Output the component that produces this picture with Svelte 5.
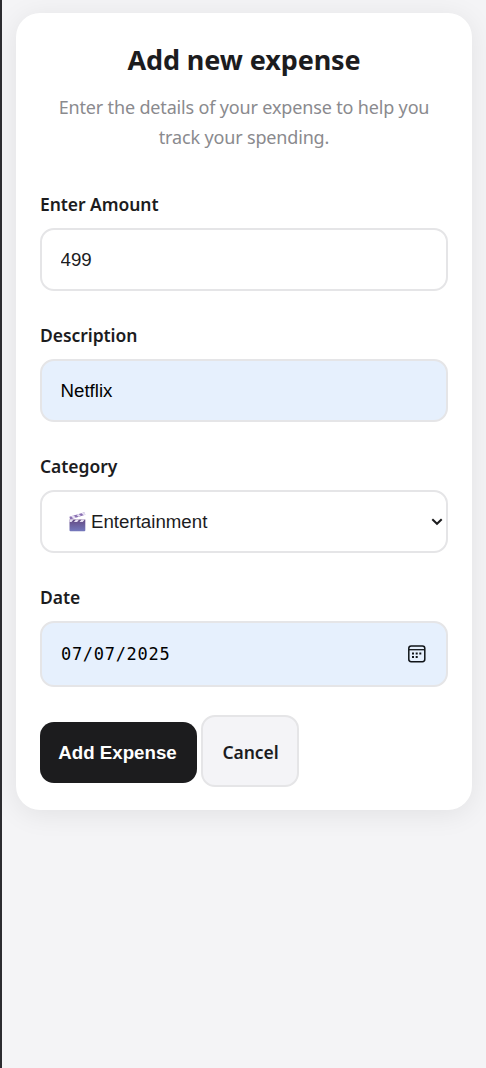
<script>
  let amount = $state('499');
  let description = $state('Netflix');
</script>

<main>
  <form class="card">
    <header>
      <h1>Add new expense</h1>
      <p>Enter the details of your expense to help you<br />track your spending.</p>
    </header>

    <label for="amount">Enter Amount</label>
    <input id="amount" bind:value={amount} />

    <label for="description">Description</label>
    <input id="description" class="filled" bind:value={description} />

    <span class="label">Category</span>
    <div class="field select">
      <svg class="clapper" width="17" height="20" viewBox="0 0 17 20" aria-hidden="true">
        <defs>
          <linearGradient id="board" x2="0" y2="1">
            <stop offset="0" stop-color="#654a83" />
            <stop offset="1" stop-color="#7478bd" />
          </linearGradient>
        </defs>
        <path fill="url(#board)" d="M.5 7.5h15.8v10.7q0 1-1 1H1.5q-1 0-1-1z" />
        <path fill="#8a70b2" d="M.4 4.8 14.8.5q.8-.2 1 .6l.5 1.7L1.1 7.4z" />
        <path fill="#e7e0f3" d="m2 4.3 2.4 2.1 2.5-.8-2.3-2zM7.2 2.8l2.3 2 2.4-.8-2.2-2zM12.4 1.3l2.2 1.9 1.7-.5-.4-1.4-1.1-.8zM1 7.5h3.6L2.5 10H.5V8zM7 7.5h3.2L8.1 10H4.9zM12.6 7.5h3.2L13.7 10h-3.2z" />
      </svg>
      <span>Entertainment</span>
      <svg class="chevron" width="12" height="8" viewBox="0 0 12 8" aria-hidden="true">
        <path d="m1.3 1.2 4.7 4.6 4.7-4.6" fill="none" stroke="#1c1c1e" stroke-width="2" />
      </svg>
    </div>

    <span class="label">Date</span>
    <div class="field date filled">
      <span>07/07/2025</span>
      <svg width="18" height="18" viewBox="0 0 18 18" aria-hidden="true">
        <rect x=".8" y=".9" width="16" height="15.8" rx="2.4" fill="none" stroke="#101418" stroke-width="1.5" />
        <path d="M1 4.7h15.8" stroke="#101418" stroke-width="1.3" />
        <path d="M4 7.5h2v2H4zm3.7 0h2v2h-2zm3.6 0h2v2h-2zM4 11h2v2H4zm3.7 0h2v2h-2z" fill="#101418" />
      </svg>
    </div>

    <div class="actions">
      <button type="button" class="primary">Add Expense</button>
      <button type="button" class="cancel">Cancel</button>
    </div>
  </form>
</main>

<style>
  :global(body) { background: #f4f4f6; }
  main {
    box-sizing: border-box;
    min-height: 1068px;
    padding: 13px 14px 0;
    border-left: 2px solid #2c2c30;
    color: #1c1c1e;
    font-family: "Noto Sans", sans-serif;
    overflow: hidden;
  }
  .card {
    box-sizing: border-box;
    height: 797px;
    padding: 28px 24px 0;
    border-radius: 24px;
    background: #fff;
    box-shadow: 0 4px 28px rgba(0, 0, 0, .08);
  }
  header { height: 148px; text-align: center; }
  h1 { margin: 0; font-size: 27px; line-height: 38px; font-weight: 700; letter-spacing: -.1px; }
  p { margin: 13px -10px 0; color: #8a8a8e; font-size: 18px; line-height: 30px; font-weight: 400; letter-spacing: -.16px; white-space: nowrap; }
  label, .label {
    display: block;
    height: 24px;
    margin: 3px 0 12px;
    font-size: 17.5px;
    line-height: 24px;
    font-weight: 600;
    letter-spacing: -.06px;
  }
  input, .field {
    box-sizing: border-box;
    display: flex;
    align-items: center;
    width: 100%;
    height: 63px;
    margin: 0 0 32px;
    padding: 0 18.5px;
    border: 2px solid #e5e5e7;
    border-radius: 14px;
    background: #fff;
    color: #1c1c1e;
    font: 18.7px "Liberation Sans", Arial, sans-serif;
    outline: none;
  }
  input.filled, .filled { background: #e6f0fd; color: #000; }
  .select { padding: 0 3px 0 27px; }
  .clapper { margin-right: 5px; }
  .chevron { margin-left: auto; }
  .date { height: 66px; padding: 0 20px 0 19px; font-family: "DejaVu Sans Mono", monospace; font-size: 17px; letter-spacing: .7px; }
  .date svg { margin-left: auto; }
  .actions { display: flex; align-items: center; gap: 4px; margin-top: -4px; }
  button { box-sizing: border-box; padding: 0; border: 0; border-radius: 14px; white-space: nowrap; }
  .primary { width: 157px; height: 61px; margin-top: 2px; padding: 1px 2px 0 0; background: #1c1c1e; color: #fff; font: 700 18.7px "Liberation Sans", Arial, sans-serif; }
  .cancel { width: 98px; height: 72px; padding: 2px 0 0 1px; border: 2px solid #e5e5e7; background: #f4f4f7; color: #1c1c1e; font: 600 17.5px "Noto Sans", sans-serif; letter-spacing: -.06px; }
</style>
